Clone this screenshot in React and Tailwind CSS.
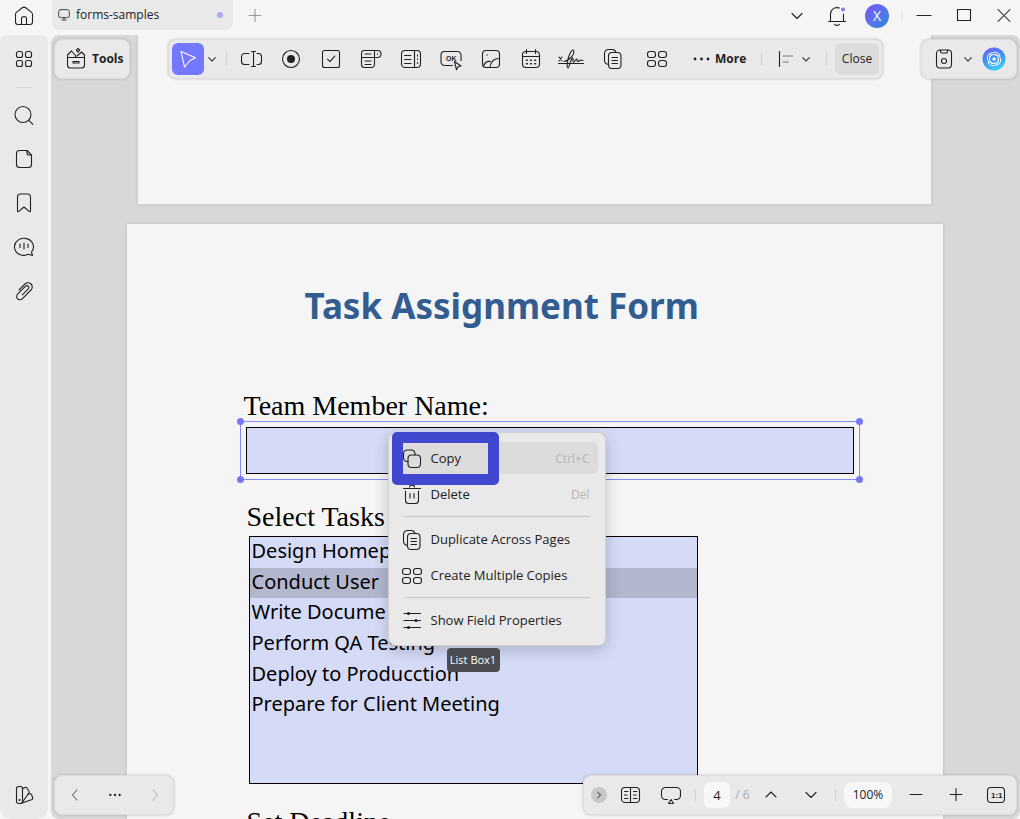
import { useState } from "react";

const tasks = [
  "Design Homep",
  "Conduct User",
  "Write Docume",
  "Perform QA Testing",
  "Deploy to Producction",
  "Prepare for Client Meeting",
];

const Icon = ({ children, className = "" }) => (
  <svg
    viewBox="0 0 24 24"
    fill="none"
    stroke="currentColor"
    strokeWidth="1.1"
    strokeLinecap="round"
    strokeLinejoin="round"
    aria-hidden="true"
    className={`size-6 shrink-0 overflow-visible ${className}`}
  >
    {children}
  </svg>
);

const HomeIcon = () => (
  <Icon>
    <path d="M3.500 10.500c0-1 .4-1.800 1.200-2.400l5.500-4.300a3 3 0 0 1 3.600 0l5.500 4.300c.8.6 1.200 1.400 1.200 2.400V18a2.500 2.500 0 0 1-2.500 2.500H6A2.500 2.500 0 0 1 3.500 18z" />
    <path d="M9.500 20.500V15a2.500 2.500 0 0 1 5 0v5.500" />
  </Icon>
);

const MonitorIcon = () => (
  <Icon className="size-4! text-[#444]">
    <rect x="4" y="4" width="16" height="12" rx="3" strokeWidth="1.500" />
    <path d="M9 19.500h6M12 16v3" strokeWidth="1.500" />
  </Icon>
);

const BellIcon = () => (
  <Icon>
    <path d="M12 3v1M5.500 17.500V10a6.500 6.500 0 0 1 9-6M18.500 10v7.500M3.500 17.500h17M9.500 20.300c1.500 1.300 3.500 1.300 5 0" />
    <circle cx="18" cy="5.500" r="2" fill="#7a7cff" stroke="none" />
  </Icon>
);

const GridIcon = () => (
  <Icon>
    <rect x="4.500" y="4.500" width="6" height="6" rx="2" />
    <rect x="13.500" y="4.500" width="6" height="6" rx="2" />
    <rect x="4.500" y="13.500" width="6" height="6" rx="2" />
    <rect x="13.500" y="13.500" width="6" height="6" rx="2" />
  </Icon>
);

const WideGridIcon = () => (
  <Icon>
    <rect x="2.500" y="4.500" width="8" height="6" rx="2.500" />
    <rect x="13.500" y="4.500" width="8" height="6" rx="2.500" />
    <rect x="2.500" y="13.500" width="8" height="6" rx="2.500" />
    <rect x="13.500" y="13.500" width="8" height="6" rx="2.500" />
  </Icon>
);

const SearchIcon = () => (
  <Icon>
    <circle cx="11" cy="11.500" r="8" />
    <path d="M16.800 17.300l4 4" />
  </Icon>
);

const PageIcon = () => (
  <Icon>
    <path d="M15 3.500H7.500a3 3 0 0 0-3 3v11a3 3 0 0 0 3 3h9a3 3 0 0 0 3-3V8z" />
    <path d="M15 3.500V6a2 2 0 0 0 2 2h2.500" />
  </Icon>
);

const BookmarkIcon = () => (
  <Icon>
    <path d="M5.500 20V6a3 3 0 0 1 3-3h7a3 3 0 0 1 3 3v14c0 .6-.6 1-1.100.600L12 16l-5.400 4.600c-.5.400-1.100 0-1.100-.600z" />
  </Icon>
);

const CommentIcon = () => (
  <Icon>
    <path d="M20.500 20.500l-4-1.200a9.500 8.500 0 1 1 3-2.300z" />
    <path d="M8 9v3.500M12 8v6M16 9v3.500" />
  </Icon>
);

const ClipIcon = () => (
  <Icon>
    <path d="M7 11l6-6a4.200 4.200 0 0 1 6 0 4.200 4.200 0 0 1 0 6l-8.800 8.800a3.200 3.200 0 0 1-4.600 0 3.200 3.200 0 0 1 0-4.600l8-8a1.900 1.900 0 0 1 2.700 0 1.900 1.900 0 0 1 0 2.700l-6 6" />
  </Icon>
);

const SwatchIcon = () => (
  <Icon>
    <rect x="4.500" y="3.500" width="6" height="17" rx="2.200" />
    <path d="M10.500 6l1.700-1.200c1-.8 2.200-.6 2.900.4l1.700 2.500c.6.900.5 1.800-.1 2.600L10.500 19" />
    <path d="M15.800 11.500l1.400-.600c1-.5 2-.1 2.400.9l.9 2.400c.4 1.100-.1 2.200-1.100 2.600L9.500 20.300" />
    <circle cx="7.500" cy="17" r=".5" fill="currentColor" />
  </Icon>
);

const ToolsIcon = () => (
  <Icon>
    <path d="M3.500 10.500h17v7.500a3 3 0 0 1-3 3h-11a3 3 0 0 1-3-3zM9 14.500h6v1.500H9z" />
    <path d="M3.500 10.500V8l4-4 4 4.500v2M20.500 10.500V8l-3-3-4.500 4" />
    <path d="M14 1.500l1.700 1.700L14 5l-1.700-1.700z" />
  </Icon>
);

const PointerIcon = () => (
  <Icon className="text-white">
    <path d="M5 4.500l14.500 6.300-5.500 2.700-5.500 6.500z" />
  </Icon>
);

const TextFieldIcon = () => (
  <Icon>
    <path d="M10 6.500H5.500A3 3 0 0 0 2.500 9.500v5A3 3 0 0 0 5.500 17.500H10M18 6.500h1.500a3 3 0 0 1 3 3v5a3 3 0 0 1-3 3H18M14.500 4.500v15M12.500 4.500h4M12.500 19.500h4" />
  </Icon>
);

const RadioIcon = () => (
  <Icon>
    <circle cx="12" cy="12" r="8.500" />
    <circle cx="12" cy="12" r="4" fill="currentColor" stroke="none" />
  </Icon>
);

const CheckboxIcon = () => (
  <Icon>
    <rect x="3.500" y="3.500" width="17" height="17" rx="2" />
    <path d="M8.500 12.200l2.500 2.500 4.800-5.500" />
  </Icon>
);

const DropdownIcon = () => (
  <Icon>
    <path d="M15.500 10.500h-13V6A2.500 2.500 0 0 1 5 3.500h13.500a3.500 3.500 0 0 1 0 7h-3zM15.500 3.500v14a3 3 0 0 1-3 3h-7a3 3 0 0 1-3-3v-7" />
    <path d="M6 7h6M6 14h6M6 17.500h6M18.500 6.700v.600" />
  </Icon>
);

const ListBoxIcon = () => (
  <Icon>
    <rect x="2.500" y="3.500" width="19" height="17" rx="3.500" />
    <path d="M15.500 3.500v17M5.500 8.500h6.500M5.500 12.500h6.500M5.500 16.500h6.500M18.500 8v1M18.500 12v.500M18.500 15.500v1" />
  </Icon>
);

const ButtonIcon = () => (
  <Icon>
    <path d="M13.500 18.500H5.500A3.500 3.500 0 0 1 2 15V8a3.500 3.500 0 0 1 3.500-3.500h13A3.500 3.500 0 0 1 22 8v5.500" />
    <text x="7" y="14.300" fontSize="7" fontWeight="700" fontFamily="Liberation Sans" fill="currentColor" stroke="none">OK</text>
    <path d="M15.500 14.500l6.500 4.500-3 .800-1.500 3z" fill="#e9e9e9" />
  </Icon>
);

const ImageIcon = () => (
  <Icon>
    <rect x="3.500" y="3.500" width="17" height="17" rx="3.500" />
    <path d="M4.500 19.500c1-4 4-5.500 7-5M20.500 11.500c-6.500 0-9 4-9.500 9M8 7.800v.400" />
  </Icon>
);

const CalendarIcon = () => (
  <Icon>
    <rect x="3.500" y="4.500" width="17" height="16" rx="3.500" />
    <path d="M3.500 9.500h17M7.500 2.500v4M16.500 2.500v4" />
    <path d="M7.500 13.200h.800M11.600 13.200h.800M15.700 13.200h.800M7.500 16.800h.800M11.600 16.800h.800M15.700 16.800h.800" strokeWidth="1.600" />
  </Icon>
);

const SignatureIcon = () => (
  <Icon>
    <path d="M0 10l3 4M3 10l-3 4M-.500 16.500h25" />
    <path d="M5 14.500c6-1 11-7.500 9.500-11-1.500-2.500-5 5-6 11-.6 3.500-.5 6.500.5 6.500 1.500 0 1.500-7 4.500-10 1.500 0-.5 4 1 4.200 1.500 0 2-3.500 3.500-3.200 0 1.200-.2 2.500 1 2.500 1 0 1.500-1.500 2.500-1.500.8 0 1.200.8 2.500.500" />
  </Icon>
);

const CopiesIcon = () => (
  <Icon>
    <path d="M7.500 17.500A4.500 4.500 0 0 1 3.500 13V6.500A4 4 0 0 1 7.500 2.500h3.500a4 4 0 0 1 4 3" />
    <rect x="7.500" y="5.500" width="12.500" height="16" rx="3.500" />
    <path d="M11 10.500h5.500M11 13.500h5.500M11 16.500h5.500" />
  </Icon>
);

const CopyIcon = () => (
  <Icon>
    <path d="M8 14.500H7A3.500 3.500 0 0 1 3.500 11V6.500A3.500 3.500 0 0 1 7 3h4.500A3.500 3.500 0 0 1 15 6.500v1.500" />
    <rect x="8" y="8" width="12.500" height="12.500" rx="3.500" />
  </Icon>
);

const TrashIcon = () => (
  <Icon>
    <path d="M3.500 5.500h17M9.500 4c0-2.500 5-2.500 5 0M5.500 8v9.500a3 3 0 0 0 3 3h7a3 3 0 0 0 3-3V8M10 10.500v4.500M14 10.500v4.500" />
  </Icon>
);

const SlidersIcon = () => (
  <Icon>
    <path d="M4 4.500h16.500M4 11.500h16.500M4 18.500h16.500" />
    <g fill="currentColor" stroke="none">
      <circle cx="8.500" cy="4.500" r="1.600" />
      <circle cx="16" cy="11.500" r="1.600" />
      <circle cx="8.500" cy="18.500" r="1.600" />
    </g>
  </Icon>
);

const AlignIcon = () => (
  <Icon>
    <path d="M5.500 4.500v15" />
    <path d="M9 9h9.500M9 15h5.500" stroke="#777" />
  </Icon>
);

const SaveIcon = () => (
  <Icon>
    <rect x="4.500" y="3" width="15" height="18" rx="3.500" />
    <path d="M8.500 3v1.500A1.500 1.500 0 0 0 10 6h4a1.500 1.500 0 0 0 1.500-1.500V3" />
    <circle cx="12" cy="14" r="2.500" />
  </Icon>
);

const AssistantIcon = () => (
  <Icon>
    <defs>
      <linearGradient id="assistant" x1="0.2" y1="0" x2="0.6" y2="1">
        <stop offset="0" stopColor="#7560f2" />
        <stop offset="0.5" stopColor="#3994f0" />
        <stop offset="1" stopColor="#44d0fa" />
      </linearGradient>
    </defs>
    <circle cx="12" cy="12" r="11.500" fill="url(#assistant)" stroke="none" />
    <g stroke="white" strokeWidth="1">
      <circle cx="12" cy="12" r="4.500" />
      <path d="M7.500 12.500C7 8 10 4.500 14.500 5.500c2 .5 3 1.800 3.500 3.500M11.500 7.500C16 7 19.500 10 18.500 14.500c-.5 2-1.800 3-3.500 3.500M16.500 11.500C17 16 14 19.500 9.500 18.500c-2-.5-3-1.800-3.500-3.500M12.500 16.500C8 17 4.500 14 5.500 9.500c.5-2 1.800-3 3.500-3.500" />
      <circle cx="12" cy="12" r="1.200" fill="white" />
    </g>
  </Icon>
);

const ReadIcon = () => (
  <Icon>
    <rect x="2.500" y="4.500" width="18" height="15" rx="3.500" />
    <path d="M11.500 4.500v15M5.500 8.500H9M5.500 12H8M5.500 15.500H9M14.500 8.500h3.500M14.500 12h2.500M14.500 15.500h3.500" />
  </Icon>
);

const PresentIcon = () => (
  <Icon>
    <path d="M8.500 16.500H6.500a4 4 0 0 1-4-4V8.500a4 4 0 0 1 4-4h11a4 4 0 0 1 4 4v4a4 4 0 0 1-4 4h-2" />
    <path d="M12 16.500l2.500 4h-5z" />
  </Icon>
);

const ActualSizeIcon = () => (
  <Icon>
    <rect x="3.500" y="4.500" width="17" height="15" rx="3.500" />
    <text x="7" y="15" fontSize="8" fontWeight="700" fontFamily="Liberation Sans" fill="currentColor" stroke="none">1:1</text>
  </Icon>
);

const DownIcon = ({ className }) => (
  <Icon className={className}>
    <path d="M7 9.500l5 5 5-5" />
  </Icon>
);

const SmallDownIcon = () => (
  <Icon className="size-4! text-[#444]">
    <path d="M7 10l5 5 5-5" strokeWidth="1.800" />
  </Icon>
);

const MinusIcon = () => (
  <Icon>
    <path d="M6 11.500h12" />
  </Icon>
);

const PlusIcon = ({ className }) => (
  <Icon className={className}>
    <path d="M6 11.500h12M12 5.500v12" />
  </Icon>
);

const Dots = () => (
  <Icon>
    <g fill="currentColor" stroke="none">
      <circle cx="6" cy="12" r="1.400" />
      <circle cx="12.500" cy="12" r="1.400" />
      <circle cx="19" cy="12" r="1.400" />
    </g>
  </Icon>
);

const IconButton = ({ label, children, className = "w-10" }) => (
  <button type="button" aria-label={label} className={`flex h-8 shrink-0 items-center justify-center ${className}`}>
    {children}
  </button>
);

const Divider = () => <span className="h-3 w-px shrink-0 bg-[#cfcfcf]" />;

const barStyle = "pointer-events-auto flex h-10 items-center rounded-lg border border-[#dcdcdc] bg-[#e9e9e9] shadow-[0_0_3px_rgba(0,0,0,0.2)]";

const formTools = [
  ["Text field", TextFieldIcon],
  ["Radio button", RadioIcon],
  ["Check box", CheckboxIcon],
  ["Dropdown", DropdownIcon],
  ["List box", ListBoxIcon],
  ["Push button", ButtonIcon],
  ["Image", ImageIcon],
  ["Date", CalendarIcon],
  ["Signature", SignatureIcon],
];

const TitleBar = () => (
  <header className="flex h-[35px] shrink-0 items-start">
    <IconButton label="Home" className="w-12">
      <HomeIcon />
    </IconButton>
    <div className="ml-1 flex h-[30px] w-[181px] items-center rounded-b-lg bg-[#e9e9e9] pr-2.5 pl-1">
      <MonitorIcon />
      <span className="ml-1 flex-1 text-[12px]">forms-samples</span>
      <span className="size-1.5 rounded-full bg-[#a9abf8]" />
    </div>
    <IconButton label="New tab" className="ml-0.5 w-10">
      <PlusIcon className="text-[#999]" />
    </IconButton>
    <div className="ml-auto flex items-center">
      <IconButton label="Tab list"><DownIcon /></IconButton>
      <IconButton label="Notifications"><BellIcon /></IconButton>
      <button type="button" className="mx-2 size-6 rounded-full bg-linear-to-br from-[#7850f5] to-[#0c8be0] text-[14px] leading-6 text-white">
        X
      </button>
      <span className="mr-1.5 ml-1 h-3 w-px bg-[#e8e8e8]" />
      <IconButton label="Minimize" className="w-8"><Icon><path d="M5 11.500h14" /></Icon></IconButton>
      <IconButton label="Maximize" className="w-12"><Icon><rect x="5.500" y="5.500" width="13" height="11" /></Icon></IconButton>
      <IconButton label="Close window" className="w-8"><Icon className="text-[#555]"><path d="M6 5.500l12 12M18 5.500l-12 12" /></Icon></IconButton>
    </div>
  </header>
);

const Sidebar = () => (
  <nav className="flex w-12 shrink-0 flex-col items-center rounded-t-lg rounded-b-xl bg-[#e9e9e9] pt-2 pb-2">
    <IconButton label="Thumbnails"><GridIcon /></IconButton>
    <span className="mt-3 h-px w-4 bg-[#dadada]" />
    <div className="mt-[11px] flex flex-col gap-3">
      <IconButton label="Search"><SearchIcon /></IconButton>
      <IconButton label="Pages"><PageIcon /></IconButton>
      <IconButton label="Bookmarks"><BookmarkIcon /></IconButton>
      <IconButton label="Comments"><CommentIcon /></IconButton>
      <IconButton label="Attachments"><ClipIcon /></IconButton>
    </div>
    <div className="mt-auto">
      <IconButton label="Theme"><SwatchIcon /></IconButton>
    </div>
  </nav>
);

const TopBars = () => (
  <div className="pointer-events-none absolute inset-x-[3px] top-1 flex justify-between">
    <button type="button" className={`${barStyle} w-[76px] gap-1 pl-[9px] text-[12px] font-bold`}>
      <ToolsIcon />
      Tools
    </button>
    <div className={`${barStyle} w-[715px] pl-[3px] pr-[3px]`}>
      <button type="button" aria-label="Select" className="flex size-8 shrink-0 items-center justify-center rounded-md bg-[#7477ff]">
        <PointerIcon />
      </button>
      <IconButton label="Select options" className="w-4"><SmallDownIcon /></IconButton>
      <span className="ml-1.5 mr-1 flex"><Divider /></span>
      {formTools.map(([label, FieldIcon]) => (
        <IconButton key={label} label={label}><FieldIcon /></IconButton>
      ))}
      <IconButton label="Duplicate across pages" className="w-11"><CopiesIcon /></IconButton>
      <IconButton label="Create multiple copies" className="w-11"><WideGridIcon /></IconButton>
      <button type="button" className="ml-2.5 flex items-center gap-0.5 text-[12px] font-bold">
        <Dots />
        More
      </button>
      <div className="ml-auto flex items-center">
        <Divider />
        <IconButton label="Align" className="ml-3 w-6"><AlignIcon /></IconButton>
        <IconButton label="Align options" className="w-4"><SmallDownIcon /></IconButton>
        <span className="mr-2 ml-3 flex"><Divider /></span>
        <button type="button" className="h-8 w-11 rounded-md bg-[#dcdcdc] text-[12px]">Close</button>
      </div>
    </div>
    <div className={`${barStyle} w-24 pl-1.5`}>
      <IconButton label="Save" className="w-8"><SaveIcon /></IconButton>
      <IconButton label="Save options" className="w-4"><SmallDownIcon /></IconButton>
      <IconButton label="Assistant" className="w-9"><AssistantIcon /></IconButton>
    </div>
  </div>
);

const BottomBars = () => {
  const [pageNumber, setPageNumber] = useState("4");

  return (
    <div className="pointer-events-none absolute inset-x-[3px] bottom-1 flex justify-between">
      <div className={`${barStyle} w-[120px] justify-between`}>
        <IconButton label="Back"><Icon className="text-[#666]"><path d="M14 7l-4.500 5 4.500 5" /></Icon></IconButton>
        <IconButton label="More views"><Icon className="size-4!"><g fill="currentColor" stroke="none"><circle cx="5" cy="12" r="1.700" /><circle cx="12" cy="12" r="1.700" /><circle cx="19" cy="12" r="1.700" /></g></Icon></IconButton>
        <IconButton label="Forward"><Icon className="text-[#bbb]"><path d="M10 7l4.500 5-4.500 5" /></Icon></IconButton>
      </div>
      <div className={`${barStyle} w-[434px] pl-[7px]`}>
        <button type="button" aria-label="Collapse" className="flex size-4 shrink-0 items-center justify-center rounded-full bg-[#c8c8c8]">
          <Icon className="size-4!"><path d="M10 8l4.500 4-4.500 4" strokeWidth="1.500" /></Icon>
        </button>
        <IconButton label="Reading view" className="ml-1 w-10"><ReadIcon /></IconButton>
        <IconButton label="Present"><PresentIcon /></IconButton>
        <span className="mr-2 ml-1 flex"><Divider /></span>
        <input
          aria-label="Page"
          value={pageNumber}
          onChange={(e) => setPageNumber(e.target.value)}
          className="h-[26px] w-[26px] shrink-0 rounded-md bg-[#f7f7f7] text-center text-[13px] outline-none"
        />
        <span className="ml-1 w-5 text-center text-[12px] whitespace-nowrap text-[#aaa]">/ 6</span>
        <div className="ml-auto flex items-center">
          <IconButton label="Previous page"><Icon><path d="M7 14l5-5 5 5" /></Icon></IconButton>
          <IconButton label="Next page"><DownIcon /></IconButton>
          <span className="mr-2 ml-1 flex"><Divider /></span>
          <button type="button" className="h-[26px] w-12 rounded-lg bg-[#f7f7f7] text-[12px]">100%</button>
          <span className="ml-1 flex">
            <IconButton label="Zoom out"><MinusIcon /></IconButton>
            <IconButton label="Zoom in"><PlusIcon /></IconButton>
            <IconButton label="Actual size"><ActualSizeIcon /></IconButton>
          </span>
        </div>
      </div>
    </div>
  );
};

const MenuItem = ({ icon, label, shortcut, active }) => (
  <button
    type="button"
    role="menuitem"
    className={`flex h-8 w-full items-center rounded-md pt-0.5 pr-2 pl-1 text-left text-[13px] ${active ? "bg-[#dcdcdc]" : ""}`}
  >
    {icon}
    <span className="ml-[7px] flex-1 whitespace-nowrap">{label}</span>
    {shortcut && <span className="text-[12px] text-[#b5b5b5]">{shortcut}</span>}
  </button>
);

const ContextMenu = () => (
  <div
    role="menu"
    className="absolute top-[208px] left-[261px] w-[218px] rounded-lg border border-[#d0d0d0] bg-[#e9e9e9] px-[7px] pt-[9px] pb-[9px] shadow-[0_4px_16px_rgba(0,0,0,0.2)]"
  >
    <MenuItem icon={<CopyIcon />} label="Copy" shortcut="Ctrl+C" active />
    <div className="mt-1">
      <MenuItem icon={<TrashIcon />} label="Delete" shortcut="Del" />
    </div>
    <hr className="mx-2 mt-1.5 mb-1.5 border-[#c6c6c6]" />
    <MenuItem icon={<CopiesIcon />} label="Duplicate Across Pages" />
    <div className="mt-1">
      <MenuItem icon={<WideGridIcon />} label="Create Multiple Copies" />
    </div>
    <hr className="mx-2 mt-1.5 mb-1.5 border-[#c6c6c6]" />
    <MenuItem icon={<SlidersIcon />} label="Show Field Properties" />
    {/* highlight around the Copy command */}
    <span className="pointer-events-none absolute -top-px left-[3px] h-[53px] w-[107px] rounded-[5px] border-[11px] border-[#4147cf]" />
  </div>
);

const handleStyle = "absolute size-[7px] rounded-full bg-[#7478f5]";

const TaskForm = () => {
  const [selected, setSelected] = useState(1);
  const headingStyle = "font-['Liberation_Serif',serif] text-[28px] leading-8 text-black";

  return (
    <section className="relative mx-auto mt-5 w-[816px] shrink-0 bg-[#f5f5f5] pt-[56px] pb-20 pl-[113px] shadow-[0_0_4px_rgba(0,0,0,0.12)]">
      <h1 className="pl-[65px] font-['Noto_Sans',sans-serif] text-[35px] leading-[52px] font-bold whitespace-nowrap text-[#335c91]">
        Task Assignment Form
      </h1>
      <label htmlFor="member" className={`mt-[58px] block pl-1 ${headingStyle}`}>
        Team Member Name:
      </label>
      <div className="relative -mt-[1px] w-[620px] border border-[#8689f7] p-[5px]">
        <input id="member" className="block h-[47px] w-full border border-black bg-[#d5daf6] px-2 outline-none" />
        <span className={`${handleStyle} -top-1 -left-1`} />
        <span className={`${handleStyle} -top-1 -right-1`} />
        <span className={`${handleStyle} -bottom-1 -left-1`} />
        <span className={`${handleStyle} -right-1 -bottom-1`} />
      </div>
      <h2 id="tasks" className={`mt-[21px] pl-[7px] ${headingStyle}`}>Select Tasks</h2>
      <div className="mt-[3px] ml-[9px] h-[248px] w-[449px] border border-black bg-[#d5daf6]">
        <ul role="listbox" aria-labelledby="tasks" className="grid h-[184px] grid-rows-6 font-['Noto_Sans',sans-serif] text-[20px] leading-7 text-black">
          {tasks.map((task, i) => (
            <li
              key={task}
              role="option"
              aria-selected={selected === i}
              onClick={() => setSelected(i)}
              className={`pl-0.5 whitespace-nowrap ${selected === i ? "bg-[#b3b7ce]" : ""}`}
            >
              {task}
            </li>
          ))}
        </ul>
      </div>
      <h2 className={`mt-[22px] pl-[7px] ${headingStyle}`}>Set Deadline</h2>
      <ContextMenu />
      <span role="tooltip" className="absolute top-[424px] left-80 h-6 w-[53px] rounded bg-[#4b4c51] text-center text-[11px] leading-6 whitespace-nowrap text-white">
        List Box1
      </span>
    </section>
  );
};

const App = () => {
  return (
    <div className="flex h-screen flex-col overflow-hidden bg-[#f5f5f5] font-['Open_Sans',sans-serif] text-[#222]">
      <TitleBar />
      <div className="flex min-h-0 flex-1">
        <Sidebar />
        <main className="relative ml-[3px] flex-1 overflow-hidden rounded-lg bg-[#d8d8d8]">
          <div className="flex flex-col pr-0.5">
            <section className="mx-auto h-[169px] w-[793px] shrink-0 bg-[#f5f5f5] shadow-[0_0_4px_rgba(0,0,0,0.12)]" />
            <TaskForm />
          </div>
          <TopBars />
          <BottomBars />
        </main>
      </div>
    </div>
  );
};

export default App;
